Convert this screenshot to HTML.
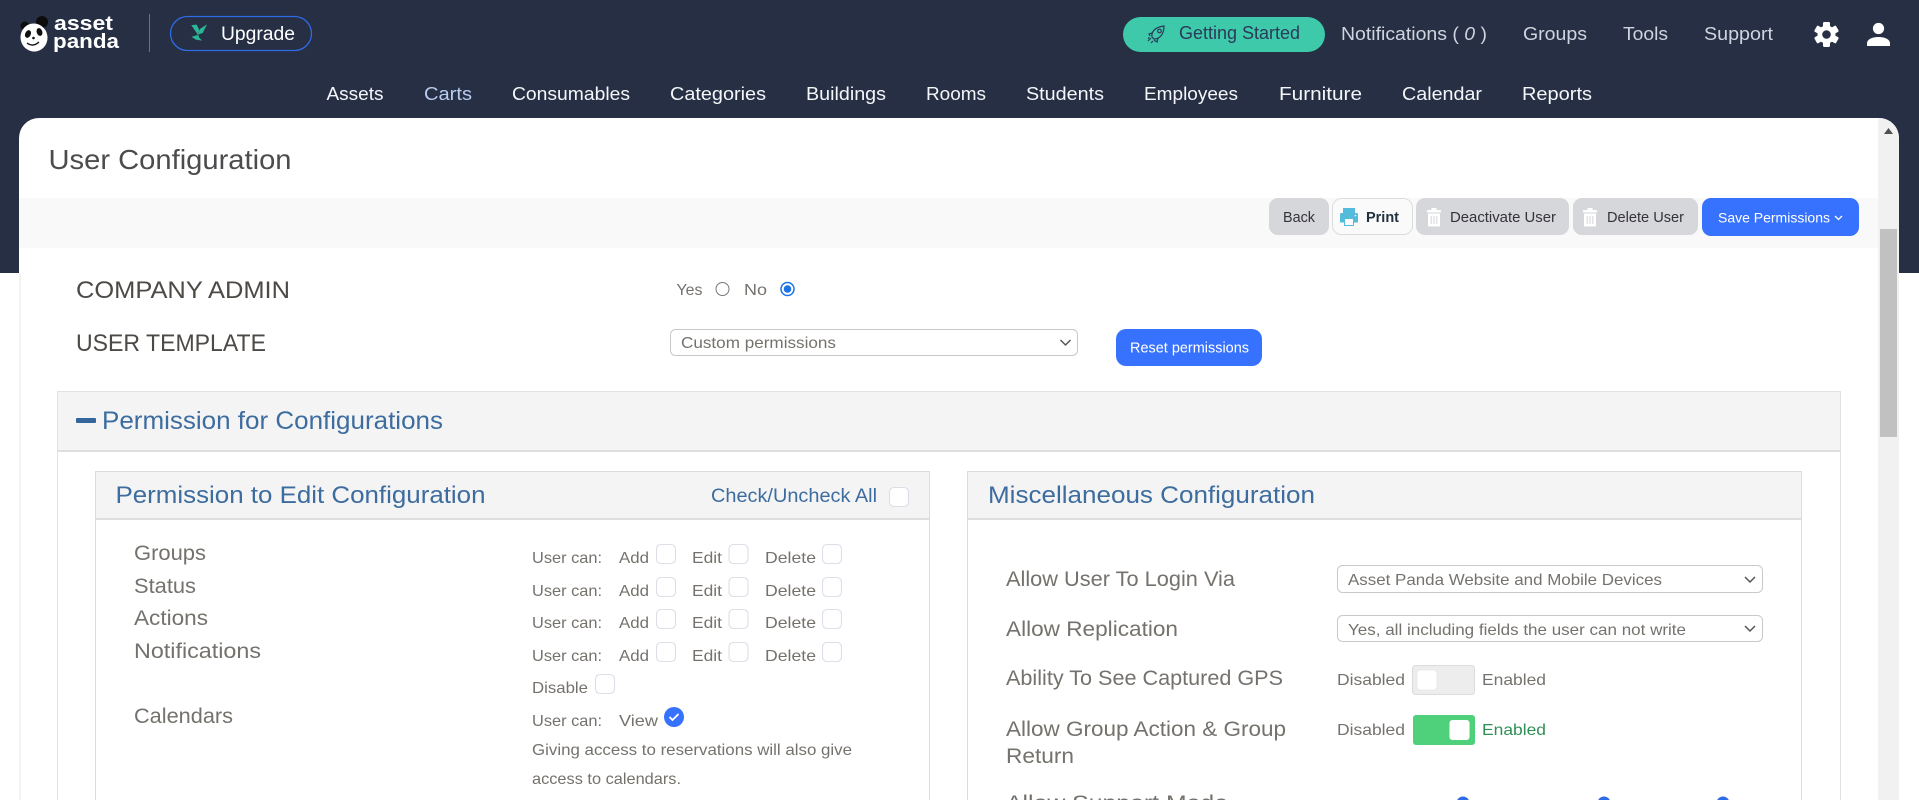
<!DOCTYPE html>
<html lang="en"><head><meta charset="utf-8"><title>User Configuration</title>
<style>
html,body{margin:0;padding:0;background:#fff;overflow:hidden;width:1919px;height:800px}
svg{display:block}
text{font-family:"Liberation Sans",Arial,sans-serif;white-space:pre}
.n{font-size:18px;fill:#f4f6fa}
.h{font-size:18px;fill:#cfd4de}
.b{font-size:14.5px;fill:#35323a}
.l{font-size:21px;fill:#75726d}
.s{font-size:16px;fill:#75726d}
.t{font-size:24px;fill:#3d6c9f}
.sel{font-size:16px;fill:#75726d}
.cb{fill:#fff;stroke:#dcdee8;stroke-width:1.1}
.ch{fill:none;stroke:#555;stroke-width:1.5}
</style></head><body>
<svg xmlns="http://www.w3.org/2000/svg" width="1919" height="800" viewBox="0 0 1919 800">
<defs>
<g id="trash"><rect x="0" y="2" width="14" height="2.5" rx=".8" fill="#fff"/><rect x="4.5" y="0" width="5" height="2.5" fill="#fff"/><path d="M1 5.5h12v12a1 1 0 0 1-1 1H2a1 1 0 0 1-1-1z" fill="#fff"/><path d="M4.2 8v8M7 8v8M9.8 8v8" stroke="#d4d5d8" stroke-width="1"/></g>
<g id="box"><rect x=".5" y=".5" width="19" height="19" rx="4.5" class="cb"/></g>
<g id="chev"><path d="M0 0l5 5 5-5" class="ch"/></g>
</defs>

<!-- header band -->
<rect width="1919" height="273" fill="#262f43"/>

<!-- logo -->
<circle cx="25" cy="26" r="4.5" fill="#0c0c0c"/><circle cx="42" cy="22" r="6" fill="#0c0c0c"/>
<ellipse cx="34" cy="37.500" rx="13.500" ry="14" fill="#fff" transform="rotate(-12 34 37.500)"/>
<ellipse cx="28" cy="34" rx="2.800" ry="4" fill="#111" transform="rotate(25 28 34)"/>
<ellipse cx="39.500" cy="32" rx="2.800" ry="4" fill="#111" transform="rotate(-20 39.500 32)"/>
<path d="M27 43q6 4.500 12-1" fill="none" stroke="#111" stroke-width="1.300"/>
<circle cx="33.500" cy="38" r="1.300" fill="#111"/>
<text x="54" y="30" textLength="59" lengthAdjust="spacingAndGlyphs" font-size="20.500" font-weight="700" fill="#fff">asset</text>
<text x="53" y="48" textLength="66" lengthAdjust="spacingAndGlyphs" font-size="20.500" font-weight="700" fill="#fff">panda</text>
<rect x="149" y="14" width="1" height="38" fill="#6b7282"/>

<!-- upgrade -->
<rect x="170.500" y="16.500" width="141" height="34" rx="17" fill="none" stroke="#2f6be6" stroke-width="1.300"/>
<path d="M192 25.500l5.500 8 1.500-3-2.500-5.500zM206 25.500l-5.500 3.500-2 5 4-1.500zM192.500 37l4.500-1.500 1 1.500 3 3-5-.8zM197.500 33l2 7" fill="#2cb596" stroke="#2cb596" stroke-width=".8"/>
<text x="221" y="40" textLength="74" lengthAdjust="spacingAndGlyphs" font-size="19" fill="#fff">Upgrade</text>

<!-- getting started -->
<rect x="1123" y="17" width="202" height="35" rx="17.500" fill="#3dc9aa"/>
<g fill="none" stroke="#2a3a58" stroke-width="1.200">
<path d="M1152 37c-1-6 4-10 12-11 0 8-4 13-10 13z"/><circle cx="1159.500" cy="31" r="1.800"/>
<path d="M1152 33l-3 1 1 2M1158 38l-1 4-3-2M1148 41l3-3M1151 43l2-2M1148 38.500l1.500-1"/>
</g>
<text x="1179" y="39" textLength="121" lengthAdjust="spacingAndGlyphs" font-size="18" fill="#2a3a58">Getting Started</text>

<!-- top links -->
<text x="1341" y="40" textLength="146" lengthAdjust="spacingAndGlyphs" class="h">Notifications ( <tspan font-style="italic">0</tspan> )</text>
<text x="1523" y="40" textLength="64" lengthAdjust="spacingAndGlyphs" class="h">Groups</text>
<text x="1623" y="40" textLength="45" lengthAdjust="spacingAndGlyphs" class="h">Tools</text>
<text x="1704" y="40" textLength="69" lengthAdjust="spacingAndGlyphs" class="h">Support</text>

<!-- gear -->
<g transform="translate(1826.500 34.500)" fill="#fff">
<rect x="-3.500" y="-12.500" width="7" height="25" rx="1.200"/>
<rect x="-3.500" y="-12.500" width="7" height="25" rx="1.200" transform="rotate(60)"/>
<rect x="-3.500" y="-12.500" width="7" height="25" rx="1.200" transform="rotate(120)"/>
<circle r="9"/><circle r="4.300" fill="#262f43"/>
</g>
<!-- user -->
<circle cx="1878.500" cy="28.500" r="5.600" fill="#fff"/>
<path d="M1867 46v-2.500c0-4.500 5.500-6.500 11.500-6.500s11.500 2 11.500 6.500v2.500z" fill="#fff"/>

<!-- nav -->
<text x="326.500" y="100" textLength="57" lengthAdjust="spacingAndGlyphs" class="n">Assets</text>
<text x="424" y="100" textLength="48" lengthAdjust="spacingAndGlyphs" class="n" style="fill:#b9cbef">Carts</text>
<text x="512" y="100" textLength="118" lengthAdjust="spacingAndGlyphs" class="n">Consumables</text>
<text x="670" y="100" textLength="96" lengthAdjust="spacingAndGlyphs" class="n">Categories</text>
<text x="806" y="100" textLength="80" lengthAdjust="spacingAndGlyphs" class="n">Buildings</text>
<text x="926" y="100" textLength="60" lengthAdjust="spacingAndGlyphs" class="n">Rooms</text>
<text x="1026" y="100" textLength="78" lengthAdjust="spacingAndGlyphs" class="n">Students</text>
<text x="1144" y="100" textLength="94" lengthAdjust="spacingAndGlyphs" class="n">Employees</text>
<text x="1279" y="100" textLength="83" lengthAdjust="spacingAndGlyphs" class="n">Furniture</text>
<text x="1402" y="100" textLength="80" lengthAdjust="spacingAndGlyphs" class="n">Calendar</text>
<text x="1522" y="100" textLength="70" lengthAdjust="spacingAndGlyphs" class="n">Reports</text>

<!-- card -->
<path d="M19 800V138a20 20 0 0 1 20-20H1879a20 20 0 0 1 20 20V800z" fill="#fff"/>
<rect x="19" y="273" width="2" height="527" fill="#f3f3f3"/>
<text x="48.500" y="169" textLength="243" lengthAdjust="spacingAndGlyphs" font-size="28" fill="#4c4c4e">User Configuration</text>

<!-- toolbar -->
<rect x="19" y="198" width="1859" height="50" fill="#f9f9f9"/>
<!-- scrollbar -->
<path d="M1878 118h1a20 20 0 0 1 20 20V800h-21z" fill="#f1f1f1"/>
<path d="M1884 134l4.500-6 4.500 6z" fill="#505050"/>
<rect x="1880" y="229" width="17" height="208" fill="#c1c1c1"/>

<rect x="1269" y="198" width="60" height="37" rx="9" fill="#d6d7da"/>
<text x="1283" y="222" textLength="32" lengthAdjust="spacingAndGlyphs" class="b">Back</text>
<rect x="1332.500" y="198.500" width="80" height="36" rx="9" fill="#fafafa" stroke="#dcdcdc"/>
<path d="M1343 208h12v5h-12z" fill="#55bbdd"/><path d="M1340 214.500a1.500 1.500 0 0 1 1.500-1.500h15a1.500 1.500 0 0 1 1.500 1.500v8h-4v3.500h-10v-3.500h-4z" fill="#55bbdd"/>
<rect x="1344.500" y="218.500" width="9" height="7" fill="#fafafa" stroke="#55bbdd"/><circle cx="1355.500" cy="215.500" r=".8" fill="#fff"/>
<text x="1366" y="222" textLength="33" lengthAdjust="spacingAndGlyphs" class="b" font-weight="700" style="fill:#22303f">Print</text>
<rect x="1416" y="198" width="153" height="37" rx="9" fill="#d6d7da"/>
<use href="#trash" x="1427" y="208"/>
<text x="1450" y="222" textLength="106" lengthAdjust="spacingAndGlyphs" class="b">Deactivate User</text>
<rect x="1573" y="198" width="125" height="37" rx="9" fill="#d6d7da"/>
<use href="#trash" x="1583" y="208"/>
<text x="1607" y="222" textLength="77" lengthAdjust="spacingAndGlyphs" class="b">Delete User</text>
<rect x="1702" y="198" width="157" height="38" rx="9" fill="#3772ff"/>
<text x="1718" y="222.500" textLength="112" lengthAdjust="spacingAndGlyphs" font-size="14" fill="#fff">Save Permissions</text>
<path d="M1835 216l3.500 3.500 3.500-3.500" fill="none" stroke="#fff" stroke-width="1.300"/>

<!-- company admin -->
<text x="76" y="298" textLength="214" lengthAdjust="spacingAndGlyphs" font-size="24" fill="#4d4a46">COMPANY ADMIN</text>
<text x="76" y="351" textLength="190" lengthAdjust="spacingAndGlyphs" font-size="24" fill="#4d4a46">USER TEMPLATE</text>
<text x="676.500" y="295" textLength="26" lengthAdjust="spacingAndGlyphs" class="s">Yes</text>
<circle cx="722.500" cy="289" r="6.500" fill="#fff" stroke="#777"/>
<text x="744" y="295" textLength="23" lengthAdjust="spacingAndGlyphs" class="s">No</text>
<circle cx="787.500" cy="289" r="6.500" fill="#fff" stroke="#1a73e8" stroke-width="1.500"/><circle cx="787.500" cy="289" r="3.800" fill="#1a73e8"/>

<rect x="670.500" y="329.500" width="407" height="26" rx="5" fill="#fff" stroke="#c9c9c9"/>
<text x="681" y="348" textLength="155" lengthAdjust="spacingAndGlyphs" class="sel">Custom permissions</text>
<use href="#chev" x="1060.500" y="340"/>
<rect x="1116" y="329" width="146" height="37" rx="10" fill="#3772ff"/>
<text x="1130" y="352.500" textLength="119" lengthAdjust="spacingAndGlyphs" font-size="14.500" fill="#fff">Reset permissions</text>

<!-- outer panel -->
<rect x="57.500" y="391.500" width="1783" height="420" fill="#fff" stroke="#e2e2e2"/>
<rect x="58" y="392" width="1782" height="58" fill="#f4f4f4"/>
<rect x="58" y="450" width="1782" height="2" fill="#dedede"/>
<rect x="76" y="418" width="20" height="5" rx="1" fill="#34659b"/>
<text x="102" y="429" textLength="341" lengthAdjust="spacingAndGlyphs" class="t" style="font-size:25px">Permission for Configurations</text>

<!-- left panel -->
<rect x="95.500" y="471.500" width="834" height="340" fill="#fff" stroke="#dcdcdc"/>
<rect x="96" y="472" width="833" height="46" fill="#f4f4f4"/>
<rect x="96" y="518" width="833" height="2" fill="#dedede"/>
<text x="115.500" y="503" textLength="370" lengthAdjust="spacingAndGlyphs" class="t">Permission to Edit Configuration</text>
<text x="711" y="502" textLength="166" lengthAdjust="spacingAndGlyphs" font-size="19" fill="#3d6c9f">Check/Uncheck All</text>
<use href="#box" x="889" y="487"/>

<text x="134" y="560" textLength="72" lengthAdjust="spacingAndGlyphs" class="l">Groups</text>
<text x="134" y="593" textLength="62" lengthAdjust="spacingAndGlyphs" class="l">Status</text>
<text x="134" y="625" textLength="74" lengthAdjust="spacingAndGlyphs" class="l">Actions</text>
<text x="134" y="658" textLength="127" lengthAdjust="spacingAndGlyphs" class="l">Notifications</text>
<text x="134" y="723" textLength="99" lengthAdjust="spacingAndGlyphs" class="l">Calendars</text>

<g class="s">
<text x="532" y="563" textLength="70" lengthAdjust="spacingAndGlyphs" class="s">User can:</text><text x="619" y="563" textLength="30" lengthAdjust="spacingAndGlyphs" class="s">Add</text><text x="692" y="563" textLength="30" lengthAdjust="spacingAndGlyphs" class="s">Edit</text><text x="765" y="563" textLength="51" lengthAdjust="spacingAndGlyphs" class="s">Delete</text>
<text x="532" y="596" textLength="70" lengthAdjust="spacingAndGlyphs" class="s">User can:</text><text x="619" y="596" textLength="30" lengthAdjust="spacingAndGlyphs" class="s">Add</text><text x="692" y="596" textLength="30" lengthAdjust="spacingAndGlyphs" class="s">Edit</text><text x="765" y="596" textLength="51" lengthAdjust="spacingAndGlyphs" class="s">Delete</text>
<text x="532" y="628" textLength="70" lengthAdjust="spacingAndGlyphs" class="s">User can:</text><text x="619" y="628" textLength="30" lengthAdjust="spacingAndGlyphs" class="s">Add</text><text x="692" y="628" textLength="30" lengthAdjust="spacingAndGlyphs" class="s">Edit</text><text x="765" y="628" textLength="51" lengthAdjust="spacingAndGlyphs" class="s">Delete</text>
<text x="532" y="661" textLength="70" lengthAdjust="spacingAndGlyphs" class="s">User can:</text><text x="619" y="661" textLength="30" lengthAdjust="spacingAndGlyphs" class="s">Add</text><text x="692" y="661" textLength="30" lengthAdjust="spacingAndGlyphs" class="s">Edit</text><text x="765" y="661" textLength="51" lengthAdjust="spacingAndGlyphs" class="s">Delete</text>
<text x="532" y="693" textLength="56" lengthAdjust="spacingAndGlyphs" class="s">Disable</text>
<text x="532" y="726" textLength="70" lengthAdjust="spacingAndGlyphs" class="s">User can:</text><text x="619" y="726" textLength="39" lengthAdjust="spacingAndGlyphs" class="s">View</text>
<text x="532" y="755" textLength="320" lengthAdjust="spacingAndGlyphs" class="s">Giving access to reservations will also give</text>
<text x="532" y="784" textLength="149" lengthAdjust="spacingAndGlyphs" class="s">access to calendars.</text>
</g>
<use href="#box" x="656" y="544"/><use href="#box" x="728.500" y="544"/><use href="#box" x="822" y="544"/>
<use href="#box" x="656" y="577"/><use href="#box" x="728.500" y="577"/><use href="#box" x="822" y="577"/>
<use href="#box" x="656" y="609"/><use href="#box" x="728.500" y="609"/><use href="#box" x="822" y="609"/>
<use href="#box" x="656" y="642"/><use href="#box" x="728.500" y="642"/><use href="#box" x="822" y="642"/>
<use href="#box" x="595" y="674"/>
<circle cx="674" cy="717" r="10" fill="#3772ff"/><path d="M669.500 717l3 3 6-6" fill="none" stroke="#fff" stroke-width="1.800"/>

<!-- right panel -->
<rect x="967.500" y="471.500" width="834" height="340" fill="#fff" stroke="#dcdcdc"/>
<rect x="968" y="472" width="833" height="46" fill="#f4f4f4"/>
<rect x="968" y="518" width="833" height="2" fill="#dedede"/>
<text x="988" y="503" textLength="327" lengthAdjust="spacingAndGlyphs" class="t">Miscellaneous Configuration</text>

<text x="1006" y="586" textLength="229" lengthAdjust="spacingAndGlyphs" class="l">Allow User To Login Via</text>
<text x="1006" y="636" textLength="172" lengthAdjust="spacingAndGlyphs" class="l">Allow Replication</text>
<text x="1006" y="685" textLength="277" lengthAdjust="spacingAndGlyphs" class="l">Ability To See Captured GPS</text>
<text x="1006" y="736" textLength="280" lengthAdjust="spacingAndGlyphs" class="l">Allow Group Action &amp; Group</text>
<text x="1006" y="763" textLength="68" lengthAdjust="spacingAndGlyphs" class="l">Return</text>
<text x="1006" y="810" textLength="222" lengthAdjust="spacingAndGlyphs" class="l">Allow Support Mode</text>

<rect x="1337.500" y="565.500" width="425" height="27" rx="5" fill="#fff" stroke="#c9c9c9"/>
<text x="1348" y="585" textLength="314" lengthAdjust="spacingAndGlyphs" class="sel">Asset Panda Website and Mobile Devices</text>
<use href="#chev" x="1745" y="577"/>
<rect x="1337.500" y="615.500" width="425" height="26" rx="5" fill="#fff" stroke="#c9c9c9"/>
<text x="1348" y="635" textLength="338" lengthAdjust="spacingAndGlyphs" class="sel">Yes, all including fields the user can not write</text>
<use href="#chev" x="1745" y="626"/>

<text x="1337" y="685" textLength="68" lengthAdjust="spacingAndGlyphs" class="s">Disabled</text>
<rect x="1412.500" y="665.500" width="62" height="29" rx="3" fill="#ededed" stroke="#dcdcdc"/>
<rect x="1417" y="670" width="20" height="20" rx="3" fill="#fff" stroke="#e0e0e0" stroke-width=".6"/>
<text x="1482" y="685" textLength="64" lengthAdjust="spacingAndGlyphs" class="s">Enabled</text>

<text x="1337" y="735" textLength="68" lengthAdjust="spacingAndGlyphs" class="s">Disabled</text>
<rect x="1413" y="715" width="62" height="30" rx="3" fill="#4fd07b"/>
<rect x="1449.500" y="720" width="20" height="20" rx="3" fill="#fff"/>
<text x="1482" y="735" textLength="64" lengthAdjust="spacingAndGlyphs" class="s" style="fill:#2f8f55">Enabled</text>

<circle cx="1463" cy="803" r="6.500" fill="#2f6be6"/><circle cx="1604" cy="803" r="6.500" fill="#2f6be6"/><circle cx="1723" cy="803" r="6.500" fill="#2f6be6"/>
</svg>
</body></html>
